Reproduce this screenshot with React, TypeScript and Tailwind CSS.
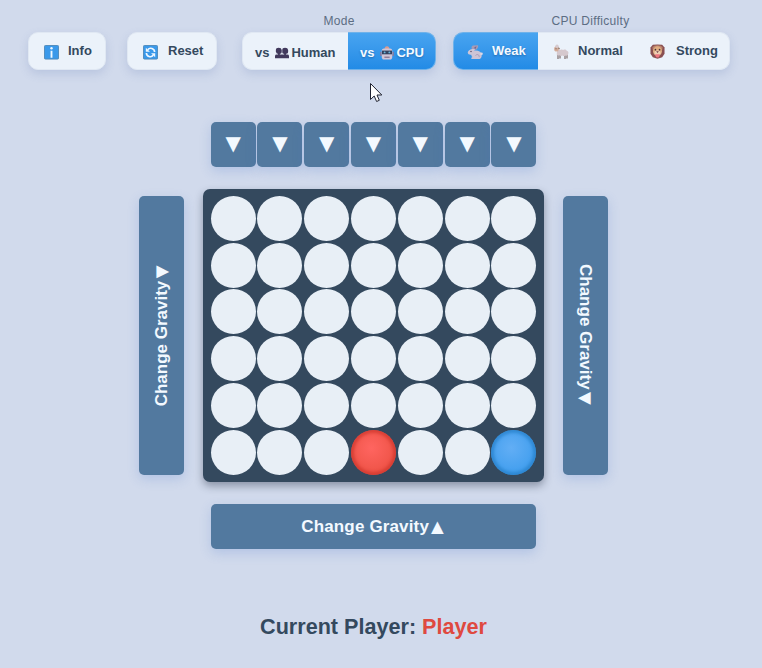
import type { ReactNode } from "react";

const Icon = ({ children, className = "w-[15px] h-[15px]" }: { children: ReactNode; className?: string }) => (
  <svg viewBox="0 0 16 16" className={`${className} shrink-0`} aria-hidden="true">
    {children}
  </svg>
);

const InfoIcon = () => (
  <Icon>
    <rect x=".5" y=".5" width="15" height="14.5" rx="1" fill="#3a99ea" stroke="#5089b8" />
    <circle cx="8" cy="3.5" r="1.3" fill="#eef7ff" />
    <path d="M8 6v7.500" stroke="#eef7ff" strokeWidth="2" fill="none" />
  </Icon>
);

const ResetIcon = () => (
  <Icon>
    <rect x=".5" y=".5" width="15" height="14.5" rx="1" fill="#3a99ea" stroke="#5089b8" />
    <path d="M12.400 7.500A4.200 4.200 0 0 0 5 5M3.600 8.500A4.200 4.200 0 0 0 11 11" stroke="#eef7ff" strokeWidth="1.800" fill="none" />
    <path d="M3 3v4.300h4.400zM13 13V8.700H8.600z" fill="#eef7ff" />
  </Icon>
);

const PeopleIcon = () => (
  <Icon className="w-[14px] h-[14px]">
    <g fill="#41395c">
      <path d="M1 4.500q0-2.500 3.200-2.500T7.700 4.500v2q0 2.500-3.200 2.500T1 6.500zM8.300 4.500q0-2.500 3.200-2.500T15 4.500v2q0 2.500-3.500 2.500T8.300 6.500z" />
      <path d="M3.500 8h2v2.500h-2zM10.500 8h2v2.500h-2z" />
      <path d="M0 14v-2.500q0-1.700 2-1.700h12q2 0 2 1.700V14z" />
    </g>
  </Icon>
);

const RobotIcon = () => (
  <Icon className="w-[14px] h-[14px]">
    <path d="M5.300 3.500Q5.300 .3 8 .3t2.700 3.200z" fill="#dd9a8e" />
    <path d="M.2 6.500h1.800v5H.2zM14 6.500h1.800v5H14z" fill="#8a7899" />
    <path d="M2 5Q2 2.800 4.500 2.800h7Q14 2.800 14 5v7.300Q14 15.500 11.500 15.500h-7Q2 15.500 2 12.300z" fill="#d0c5d8" />
    <path d="M2.300 5.200h11.400v4.300H2.300z" fill="#344361" />
    <circle cx="5.300" cy="7.300" r="1.100" fill="#6cb5dc" />
    <circle cx="10.700" cy="7.300" r="1.100" fill="#6cb5dc" />
    <path d="M5 12.200h6v1.200H5z" fill="#796583" />
  </Icon>
);

const RabbitIcon = () => (
  <Icon className="w-[16px] h-[16px]">
    <path d="M5.500 6C4 4 4.200 2 6 1.500l5-.3q.8 1.500-1.500 4.300z" fill="#a79bb5" />
    <path d="M7 4Q8 2.200 9.500 2.500L8.500 5z" fill="#77658c" />
    <path d="M8 5.200C5.500 4.300 1 5.500 .8 8.500c0 2 2 2.500 4.500 2z" fill="#cfc6d7" />
    <path d="M4.500 8c3.500-2.800 9.300-1.500 10 2 .8 2.700-.5 4.500-2 5H4.500c-.7-1 .2-1.700 1.100-1.900C4.300 12.500 3.900 10.500 4.500 8z" fill="#cdc4d6" />
    <path d="M8.500 11.500c2-2 4-.5 3.700 1.700" stroke="#a092b0" strokeWidth=".8" fill="none" />
    <circle cx="14.500" cy="9.800" r="1.300" fill="#ded9e5" />
    <circle cx="4" cy="7.500" r=".7" fill="#4c405d" />
  </Icon>
);

const SheepIcon = () => (
  <Icon className="w-[16px] h-[16px]">
    <path d="M5 10v5M7 11v3.500M12 11v4M14 10v4.500" stroke="#7d6b6a" strokeWidth="1.200" />
    <path d="M4 5c1.500-.7 3 .5 3.500 1 1-.8 2-.5 2.700 0 1.500-.8 3-.3 3.500 .8 1.800 .3 2 2 1.500 3-.1 1.700-1.700 2.300-2.700 1.700-1 .8-2.200 .6-3 0-1 .8-2.500 .5-3-.3C4.500 12 3.500 11 3.800 9.500z" fill="#d5c8cd" />
    <path d="M1.200 3.700 3 2l2.300 1.200 .8 1.300-1 2.800-2.500 .2C1.200 7.200 1 5.500 1.200 3.700z" fill="#d4ad99" />
    <circle cx="4" cy="2.300" r="1.700" fill="#d6cbd0" />
    <path d="M5 4 6.800 4.500" stroke="#8e7468" strokeWidth="1.200" />
    <circle cx="3" cy="4.800" r=".5" fill="#493c43" />
  </Icon>
);

const LionIcon = () => (
  <Icon>
    <path d="M3 .8 8 .5l5 .3 2.500 3v6.500L13 14l-5 1.600L3 14 .5 10.300V3.800z" fill="#894f51" />
    <path d="M2.500 3.500 4.500 1.800 8 1.200l3.500 .6 2 1.700-.5 3H3z" fill="#b9836d" />
    <ellipse cx="8" cy="7.600" rx="4.800" ry="5.200" fill="#dfac80" />
    <ellipse cx="8" cy="9.500" rx="3.300" ry="2.600" fill="#efd0b4" />
    <circle cx="5.800" cy="6" r=".9" fill="#49323a" />
    <circle cx="10.200" cy="6" r=".9" fill="#49323a" />
    <path d="M6.600 7.800h2.800L8 9.500z" fill="#6a3c42" />
    <path d="M5.500 10.800h5Q10.200 14.500 8 14.500t-2.500-3.700z" fill="#f07680" />
  </Icon>
);

const shell = "flex h-[38px] rounded-[10px] shadow-[0_4px_10px_rgba(90,115,175,0.2)]";
const panel = `${shell} overflow-hidden border border-[#e0e8f3] bg-[#ebf2fa]`;
const light = "border-y border-[#e0e8f3] bg-[#ebf2fa]";
const active =
  "border-y border-[#6fb2ea] bg-linear-to-b from-[#48a4f0] to-[#228be6] text-[#f4faff] [text-shadow:0_1px_2px_rgba(20,60,110,0.45)]";
const steel = "rounded-[5px] bg-[#52799f] text-[#f3f9ff] shadow-[0_4px_12px_rgba(70,115,200,0.22)]";
const gravity = `flex items-center justify-center text-[17px] font-bold ${steel}`;
const arrow = "font-['DejaVu_Sans',sans-serif] font-normal leading-none tracking-normal";

const Disc = ({ kind }: { kind?: "red" | "blue" }) => (
  <div
    className={
      kind === "red"
        ? "size-[45px] rounded-full bg-[radial-gradient(circle_at_45%_40%,#ff6560,#e74c3c)] shadow-[inset_0_0_3px_3px_rgba(205,50,42,0.65)]"
        : kind === "blue"
          ? "size-[45px] rounded-full bg-[radial-gradient(circle_at_45%_40%,#62aef5,#3498eb)] shadow-[inset_0_0_3px_3px_rgba(35,125,198,0.65)]"
          : "size-[45px] rounded-full bg-[#e8eff6]"
    }
  />
);

export default function App() {
  return (
    <main className="relative h-[668px] w-full overflow-hidden bg-[#d1daec] font-['Liberation_Sans',Arial,sans-serif] text-[#34495e]">
      <header className="flex h-[70px] items-end pl-[28px] text-[13px] font-bold">
        <button className={`${panel} mr-[21px] w-[78px] items-center pl-[15px]`}>
          <span className="mt-[2px]"><InfoIcon /></span>
          <span className="ml-[9px]">Info</span>
        </button>
        <button className={`${panel} mr-[25px] w-[90px] items-center pl-[15px]`}>
          <span className="mt-[2px]"><ResetIcon /></span>
          <span className="ml-[10px]">Reset</span>
        </button>
        <section className="mr-[17px] flex flex-col items-center">
          <h2 className="mb-[3px] text-[12px] leading-[16px] font-normal tracking-[0.3px] text-[#5c6d83]">Mode</h2>
          <div className={`${shell} w-[194px]`}>
            <button className={`flex w-[106px] items-center rounded-l-[10px] border-l pt-[3px] pl-[12px] ${light}`}>
              vs <span className="mt-[1px] mr-[2px] ml-[6px]"><PeopleIcon /></span>Human
            </button>
            <button className={`flex flex-1 items-center rounded-r-[10px] border-r pt-[3px] pl-[12px] ${active}`}>
              vs <span className="mr-[2px] ml-[6px]"><RobotIcon /></span>CPU
            </button>
          </div>
        </section>
        <section className="flex flex-col items-center">
          <h2 className="mr-[2px] mb-[3px] text-[12px] leading-[16px] font-normal tracking-[0.3px] text-[#5c6d83]">CPU Difficulty</h2>
          <div className={`${shell} w-[277px]`}>
            <button className={`flex w-[85px] items-center rounded-l-[10px] border-l pl-[13px] ${active}`}>
              <span className="mt-[2px]"><RabbitIcon /></span><span className="ml-[9px]">Weak</span>
            </button>
            <button className={`flex w-[98px] items-center pl-[15px] ${light}`}>
              <span className="mt-[2px]"><SheepIcon /></span><span className="ml-[9px]">Normal</span>
            </button>
            <button className={`flex flex-1 items-center rounded-r-[10px] border-r pl-[14px] ${light}`}>
              <span className="mt-[1px]"><LionIcon /></span><span className="ml-[11px]">Strong</span>
            </button>
          </div>
        </section>
      </header>

      <div className="flex w-[747px] flex-col items-center">
        <div className="mt-[52px] flex gap-[1.8px]">
          {Array.from({ length: 7 }, (_, i) => (
            <button key={i} className={`flex size-[45px] items-center justify-center pb-[3px] text-[20px] ${arrow} ${steel}`}>▼</button>
          ))}
        </div>

        <div className="mt-[22px] flex items-center gap-[19px]">
          <button className={`${gravity} h-[279px] w-[45px] pt-[1px]`}>
            <span className="rotate-180 whitespace-nowrap [text-orientation:sideways] [writing-mode:vertical-rl]">
              Change Gravity<span className={`mt-[2px] inline-block text-[16.5px] ${arrow}`}>▼</span>
            </span>
          </button>
          <div className="grid grid-cols-[repeat(7,45px)] gap-x-[1.8px] gap-y-[1.75px] rounded-[7px] bg-[#34495e] px-[7.6px] pt-[6.8px] pb-[7.4px] shadow-[0_4px_8px_rgba(30,40,60,0.4)]">
            {Array.from({ length: 42 }, (_, i) => (
              <Disc key={i} kind={i === 38 ? "red" : i === 41 ? "blue" : undefined} />
            ))}
          </div>
          <button className={`${gravity} h-[279px] w-[45px] pb-[2px]`}>
            <span className="whitespace-nowrap [text-orientation:sideways] [writing-mode:vertical-rl]">
              Change Gravity<span className={`mt-[2px] inline-block text-[16.5px] ${arrow}`}>▼</span>
            </span>
          </button>
        </div>

        <button className={`${gravity} mt-[22px] h-[45px] w-[325px] pr-[2px] tracking-[0.15px]`}>
          <span>
            Change Gravity<span className={`ml-[2px] inline-block text-[16.5px] ${arrow}`}>▲</span>
          </span>
        </button>
        <p className="mt-[65px] text-[21.6px] leading-[26px] font-bold">
          Current Player: <span className="text-[#df4940]">Player</span>
        </p>
      </div>

      <svg className="absolute top-[82px] left-[369px] h-[21px] w-[14px]" viewBox="0 0 14 21" aria-hidden="true">
        <path d="M1.500 1.500v16l3.700-3.500 2.400 5.500 2.700-1.200-2.300-5.300h4.800z" fill="#fff" stroke="#202331" />
      </svg>
    </main>
  );
}
